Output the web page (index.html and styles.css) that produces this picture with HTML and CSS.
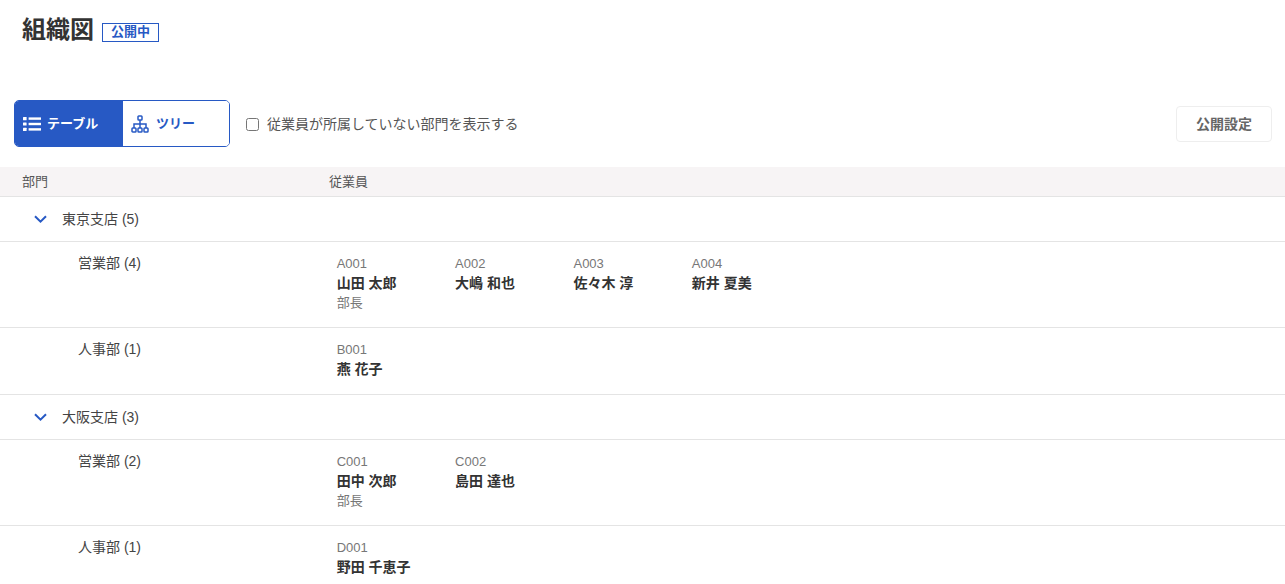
FILE: index.html
```html
<!DOCTYPE html>
<html lang="ja">
<head>
<meta charset="utf-8">
<title>組織図</title>
<link rel="stylesheet" href="styles.css">
</head>
<body>
<header class="title-bar">
  <h1 class="title">組織図</h1>
  <span class="badge">公開中</span>
</header>
<div class="toolbar">
  <div class="toggle">
    <button class="toggle-btn active" type="button">
      <svg class="icon" viewBox="0 0 18 16" width="18" height="16"><g fill="#fff"><rect x="0" y="1" width="3.6" height="3.2" rx=".5"/><rect x="0" y="6.4" width="3.6" height="3.2" rx=".5"/><rect x="0" y="11.8" width="3.6" height="3.2" rx=".5"/><rect x="5.6" y="1.4" width="12.4" height="2.4"/><rect x="5.6" y="6.8" width="12.4" height="2.4"/><rect x="5.6" y="12.2" width="12.4" height="2.4"/></g></svg>
      <span class="toggle-label">テーブル</span>
    </button>
    <button class="toggle-btn tree" type="button">
      <svg class="icon" viewBox="0 0 18 18" width="18" height="18"><g fill="none" stroke="#2759c4" stroke-width="1.5"><rect x="7" y="1" width="4" height="4" rx=".8"/><rect x="1" y="13" width="4" height="4" rx=".8"/><rect x="7" y="13" width="4" height="4" rx=".8"/><rect x="13" y="13" width="4" height="4" rx=".8"/><path d="M9 5v8M3 13V9h12v4"/></g></svg>
      <span class="toggle-label">ツリー</span>
    </button>
  </div>
  <label class="check">
    <input type="checkbox" class="check-box">
    <span class="check-label">従業員が所属していない部門を表示する</span>
  </label>
  <button class="settings" type="button">公開設定</button>
</div>
<section class="table">
  <div class="table-head">
    <div class="col-dept">部門</div>
    <div>従業員</div>
  </div>
  <div class="group">
    <svg class="chevron" viewBox="0 0 13 9" width="13" height="9"><path d="M1 1.2 6.5 6.7 12 1.2" fill="none" stroke="#2759c4" stroke-width="2"/></svg>
    <span class="group-label">東京支店 (5)</span>
  </div>
  <div class="row">
    <div class="dept">営業部 (4)</div>
    <div class="people">
      <div class="person"><div class="code">A001</div><div class="name">山田 太郎</div><div class="role">部長</div></div>
      <div class="person"><div class="code">A002</div><div class="name">大嶋 和也</div></div>
      <div class="person"><div class="code">A003</div><div class="name">佐々木 淳</div></div>
      <div class="person"><div class="code">A004</div><div class="name">新井 夏美</div></div>
    </div>
  </div>
  <div class="row">
    <div class="dept">人事部 (1)</div>
    <div class="people">
      <div class="person"><div class="code">B001</div><div class="name">燕 花子</div></div>
    </div>
  </div>
  <div class="group">
    <svg class="chevron" viewBox="0 0 13 9" width="13" height="9"><path d="M1 1.2 6.5 6.7 12 1.2" fill="none" stroke="#2759c4" stroke-width="2"/></svg>
    <span class="group-label">大阪支店 (3)</span>
  </div>
  <div class="row">
    <div class="dept">営業部 (2)</div>
    <div class="people">
      <div class="person"><div class="code">C001</div><div class="name">田中 次郎</div><div class="role">部長</div></div>
      <div class="person"><div class="code">C002</div><div class="name">島田 達也</div></div>
    </div>
  </div>
  <div class="row">
    <div class="dept">人事部 (1)</div>
    <div class="people">
      <div class="person"><div class="code">D001</div><div class="name">野田 千恵子</div></div>
    </div>
  </div>
</section>
</body>
</html>
```
FILE: styles.css
```css
* { box-sizing: border-box; }
html, body { height: 100%; overflow: hidden; }
body {
  margin: 0;
  background: #fff;
  color: #333;
  font-family: "Liberation Sans", "Noto Sans CJK JP", sans-serif;
  font-size: 14px;
}
.title-bar {
  display: flex;
  align-items: flex-start;
  gap: 8px;
  height: 100px;
  padding: 14px 0 46px 22px;
}
.title { margin: 0; font-size: 24px; line-height: 32px; font-weight: 700; color: #333; }
.badge {
  margin-top: 9px;
  width: 57px;
  height: 19px;
  border: 1px solid #2759c4;
  color: #2759c4;
  font-size: 13px;
  font-weight: 700;
  line-height: 16px;
  text-align: center;
}
.toolbar {
  display: flex;
  align-items: center;
  height: 47px;
  padding: 0 13px 0 14px;
}
.toggle {
  display: flex;
  width: 216px;
  height: 47px;
  border: 1px solid #2759c4;
  border-radius: 5px;
  overflow: hidden;
}
.toggle-btn {
  display: flex;
  flex: none;
  align-items: center;
  gap: 6px;
  width: 108px;
  padding: 1px 0 0 8px;
  border: 0;
  background: #fff;
  color: #2759c4;
  font: 700 13px "Liberation Sans", "Noto Sans CJK JP", sans-serif;
}
.toggle-btn.active { background: #2759c4; color: #fff; }
.toggle-btn.tree { width: 106px; gap: 7px; }
.toggle-label { padding-bottom: 4px; }
.icon { flex: none; }
.check {
  display: flex;
  align-items: center;
  gap: 8px;
  margin-left: 16px;
  color: #555;
  font-size: 14px;
}
.check-box { width: 13px; height: 13px; margin: 2px 0 0; }
.check-label { padding-bottom: 2px; }
.settings {
  margin-left: auto;
  width: 96px;
  height: 36px;
  padding: 0 0 2px;
  border: 1px solid #eeeeee;
  border-radius: 4px;
  background: #fff;
  color: #666;
  font: 700 14px "Liberation Sans", "Noto Sans CJK JP", sans-serif;
}
.table { margin-top: 20px; }
.table-head {
  display: flex;
  align-items: center;
  height: 30px;
  padding: 0 0 2px 22px;
  background: #f7f4f5;
  border-bottom: 1px solid #e4e4e4;
  color: #555;
  font-size: 13px;
}
.col-dept { width: 307px; }
.group {
  display: flex;
  align-items: center;
  gap: 15px;
  height: 45px;
  padding-left: 34px;
  border-bottom: 1px solid #e4e4e4;
  color: #444;
  font-size: 14px;
}
.group-label { padding-bottom: 2px; }
.chevron { flex: none; }
.row {
  display: flex;
  padding: 11px 0 15px 78px;
  border-bottom: 1px solid #e4e4e4;
}
.dept { width: 258.7px; line-height: 20px; color: #444; font-size: 14px; }
.people { display: flex; }
.person { width: 118.4px; }
.code { padding-top: 1px; color: #777; font-size: 13px; line-height: 20px; }
.name { color: #333; font-size: 14px; font-weight: 700; line-height: 19px; }
.role { color: #777; font-size: 13px; line-height: 19px; }
```
